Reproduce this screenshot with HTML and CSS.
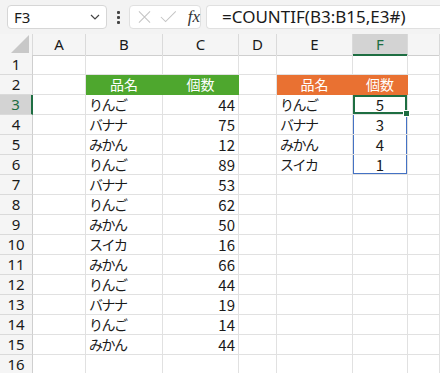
FILE: index.html
```html
<!DOCTYPE html>
<html>
<head>
  <title>COUNTIF spill</title>
  <link rel="stylesheet" href="styles.css">
</head>
<body>
  <div class="formula-bar">
    <div class="name-box">
      <span>F3</span>
      <svg class="chevron" width="10" height="6" viewBox="0 0 10 6"><path d="M1 1 L5 5 L9 1" fill="none" stroke="#444" stroke-width="1.2"/></svg>
    </div>
    <div class="dots"><i></i><i></i><i></i></div>
    <div class="fx-box">
      <svg width="14" height="14" viewBox="0 0 14 14"><path d="M1 1 L13 13 M13 1 L1 13" stroke="#c4c4c4" stroke-width="1.1"/></svg>
      <svg width="18" height="14" viewBox="0 0 18 14"><path d="M1 7 L6 12 L17 1" fill="none" stroke="#c4c4c4" stroke-width="1.1"/></svg>
      <span class="fx">fx</span>
    </div>
    <div class="formula">=COUNTIF(B3:B15,E3#)</div>
  </div>

  <div class="sheet">
    <div class="row head">
      <div class="corner"><span class="tri"></span></div>
      <div class="col">A</div><div class="col">B</div><div class="col">C</div><div class="col">D</div>
      <div class="col">E</div><div class="col active">F</div><div class="col"></div>
    </div>
    <div class="row">
      <div class="rh">1</div><div></div><div></div><div></div><div></div><div></div><div></div><div></div>
    </div>
    <div class="row">
      <div class="rh">2</div><div></div><div class="green c jp">品名</div><div class="green c jp">個数</div><div></div>
      <div class="orange c jp">品名</div><div class="orange c jp">個数</div><div></div>
    </div>
    <div class="row">
      <div class="rh active">3</div><div></div><div class="kana">りんご</div><div class="n">44</div><div></div>
      <div class="kana">りんご</div><div class="c sel">5</div><div></div>
    </div>
    <div class="row">
      <div class="rh">4</div><div></div><div class="kana">バナナ</div><div class="n">75</div><div></div>
      <div class="kana">バナナ</div><div class="c spill">3</div><div></div>
    </div>
    <div class="row">
      <div class="rh">5</div><div></div><div class="kana">みかん</div><div class="n">12</div><div></div>
      <div class="kana">みかん</div><div class="c spill">4</div><div></div>
    </div>
    <div class="row">
      <div class="rh">6</div><div></div><div class="kana">りんご</div><div class="n">89</div><div></div>
      <div class="kana">スイカ</div><div class="c spill last">1</div><div></div>
    </div>
    <div class="row">
      <div class="rh">7</div><div></div><div class="kana">バナナ</div><div class="n">53</div><div></div><div></div><div></div><div></div>
    </div>
    <div class="row">
      <div class="rh">8</div><div></div><div class="kana">りんご</div><div class="n">62</div><div></div><div></div><div></div><div></div>
    </div>
    <div class="row">
      <div class="rh">9</div><div></div><div class="kana">みかん</div><div class="n">50</div><div></div><div></div><div></div><div></div>
    </div>
    <div class="row">
      <div class="rh">10</div><div></div><div class="kana">スイカ</div><div class="n">16</div><div></div><div></div><div></div><div></div>
    </div>
    <div class="row">
      <div class="rh">11</div><div></div><div class="kana">みかん</div><div class="n">66</div><div></div><div></div><div></div><div></div>
    </div>
    <div class="row">
      <div class="rh">12</div><div></div><div class="kana">りんご</div><div class="n">44</div><div></div><div></div><div></div><div></div>
    </div>
    <div class="row">
      <div class="rh">13</div><div></div><div class="kana">バナナ</div><div class="n">19</div><div></div><div></div><div></div><div></div>
    </div>
    <div class="row">
      <div class="rh">14</div><div></div><div class="kana">りんご</div><div class="n">14</div><div></div><div></div><div></div><div></div>
    </div>
    <div class="row">
      <div class="rh">15</div><div></div><div class="kana">みかん</div><div class="n">44</div><div></div><div></div><div></div><div></div>
    </div>
    <div class="row">
      <div class="rh">16</div><div></div><div></div><div></div><div></div><div></div><div></div><div></div>
    </div>
  </div>
</body>
</html>
```

FILE: styles.css
```css
/* Page */
body {
  margin: 0;
  background-color: #f3f3f3;
  font-family: "Noto Sans CJK JP", "Noto Sans", sans-serif;
  color: #1a1a1a;
  overflow: hidden;
}

/* Formula bar */
.formula-bar {
  display: flex;
  align-items: center;
  height: 34px;
  padding-left: 7px;
  box-sizing: border-box;
}

.name-box {
  display: flex;
  align-items: center;
  justify-content: space-between;
  width: 100px;
  height: 24px;
  box-sizing: border-box;
  padding: 0 6px 0 6px;
  background-color: #fff;
  border: 1px solid #d6d6d6;
  border-radius: 4px;
  font-family: "Noto Sans", sans-serif;
  font-size: 15px;
}

.dots {
  display: flex;
  flex-direction: column;
  gap: 2px;
  width: 22px;
  align-items: center;
}

.dots i {
  display: block;
  width: 3px;
  height: 3px;
  background-color: #444;
  border-radius: 1px;
}

.fx-box {
  display: flex;
  align-items: center;
  gap: 9px;
  width: 72px;
  height: 24px;
  box-sizing: border-box;
  padding-left: 8px;
  background-color: #fff;
  border: 1px solid #e0e0e0;
  border-radius: 4px;
}

.fx {
  font-family: "Liberation Serif", serif;
  font-style: italic;
  font-size: 17px;
  color: #333;
  margin-left: 2px;
}

.formula {
  flex: 1;
  height: 24px;
  margin-left: 5px;
  padding-left: 15px;
  background-color: #fff;
  border: 1px solid #e0e0e0;
  border-right: none;
  border-radius: 4px 0 0 4px;
  box-sizing: border-box;
  font-family: "Noto Sans", sans-serif;
  font-size: 17px;
  line-height: 22px;
}

/* Sheet grid */
.sheet {
  background-color: #fff;
}

.row {
  display: grid;
  grid-template-columns: 33px 53px 77px 76px 38px 76px 55px 1fr;
  height: 20px;
  font-size: 15px;
}

.row > div {
  box-sizing: border-box;
  border-right: 1px solid #e1e1e1;
  border-bottom: 1px solid #e1e1e1;
  padding: 0 3px;
  line-height: 19px;
  white-space: nowrap;
  position: relative;
}

.row.head {
  height: 21px;
  background-color: #f5f5f5;
}

.row.head > div {
  border-right: 1px solid #dadada;
  border-bottom: 1px solid #cfcfcf;
  text-align: center;
  line-height: 20px;
  font-family: "Noto Sans", sans-serif;
}

.corner .tri {
  position: absolute;
  right: 3px;
  bottom: 2px;
  width: 0;
  height: 0;
  border-left: 18px solid transparent;
  border-bottom: 18px solid #c8c8c8;
}

.col.active {
  background-color: #d3d3d3;
  color: #1e6e42;
  border-bottom: 2px solid #1e6e42 !important;
}

.row > .rh {
  background-color: #f5f5f5;
  border-right: 1px solid #cfcfcf;
  border-bottom: 1px solid #dadada;
  text-align: center;
  padding: 0;
  font-family: "Noto Sans", sans-serif;
}

.row > .rh.active {
  background-color: #d3d3d3;
  color: #1e6e42;
  border-right: 2px solid #1e6e42;
}

/* Cells */
.n {
  text-align: right;
}

.c {
  text-align: center;
}

.jp {
  font-size: 14px;
}

.kana {
  font-size: 14px;
  letter-spacing: -1.5px;
}

.row > .green {
  background-color: #4ea72e;
  border-color: #4ea72e;
  color: #fff;
}

.row > .orange {
  background-color: #e97132;
  border-color: #e97132;
  color: #fff;
}

/* Selection and spill range */
.row > .sel {
  box-shadow: inset 0 0 0 2px #1e6e42;
}

.sel::after {
  content: "";
  position: absolute;
  right: -3px;
  bottom: -3px;
  width: 5px;
  height: 5px;
  background-color: #1e6e42;
  border: 1px solid #fff;
  z-index: 2;
}

.row > .spill {
  box-shadow: inset 1px 0 0 #4472c4, inset -1px 0 0 #4472c4;
}

.row > .spill.last {
  box-shadow: inset 1px 0 0 #4472c4, inset -1px 0 0 #4472c4, inset 0 -1px 0 #4472c4;
}
```
